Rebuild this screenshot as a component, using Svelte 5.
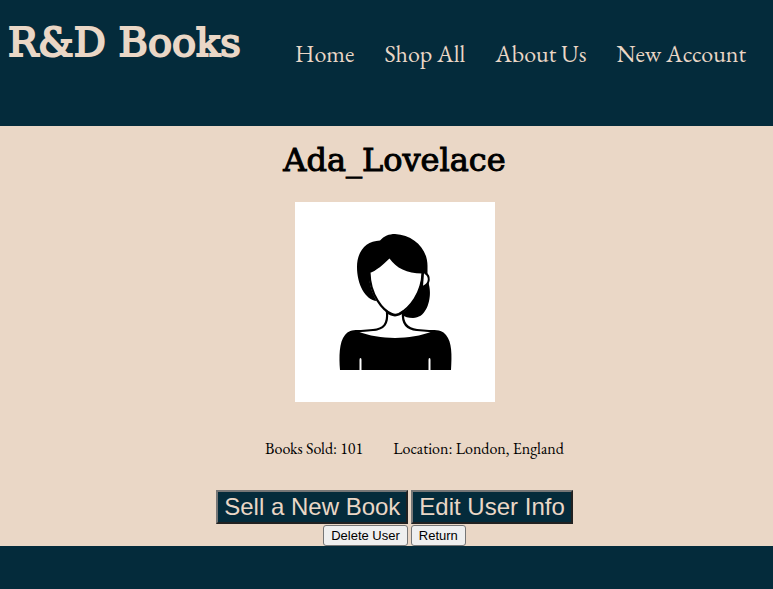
<script>
  const links = ['Home', 'Shop All', 'About Us', 'New Account'];
  const user = { name: 'Ada_Lovelace', sold: 101, location: 'London, England' };
</script>

<header>
  <h1>R&amp;D Books</h1>
  <nav>
    {#each links as link}
      <a href="#top">{link}</a>
    {/each}
  </nav>
</header>

<main>
  <h2>{user.name}</h2>
  <svg class="portrait" viewBox="0 0 200 200" role="img" aria-label="User portrait">
    <rect width="200" height="200" fill="#fff" />
    <path d="M82 99C70 98 62 82 62 65C62 49 71 39 85 38.500C89 34 94 32 100 32C119 33 133 47 132.500 65V72L134 83C137 94 133 116 118 116C113 116 110 115 107 113L100 110Z" />
    <path d="M74 71.500C81 69 89 62 94.500 56.500C101 66 112 71.500 127 71.500C126 92 112 113 100 113C89 113 74 94 74 71.500Z" fill="#fff" />
    <path d="M74.500 71C75 93 88 109 97 112Q100 113.500 104 112C115 106 127 91 127.500 71" fill="none" stroke="#000" stroke-width="2.2" />
    <path d="M129 71.500C135.500 72 134.500 83 128 84Z" fill="#fff" />
    <path d="M130 71C135.500 74 135 82 128.500 84.500" fill="none" stroke="#000" stroke-width="2" />
    <path d="M45 168C44 155 44 140 50 133C53 129 57 128 63 128L137 128C144 128 148 129 151 133C157 140 157 153 156 168H135.500V158Q135.500 156 134.500 156Q133.500 156 133.500 158V168H66.500V158Q66.500 156 65.500 156Q64.500 156 64.500 158V168Z" />
    <path d="M92 111C92 124 89 128 76 129L63 129.500C85 138 115 138 137 129.500L122 128.500C111 127 108 123 108 111Q100 116 92 111Z" fill="#fff" />
    <path d="M92 110C93 122 89 127 78 128L60 129.500M108 110C107 121 112 127 122 128L140 129.500M91 109Q100 117.500 109 109" fill="none" stroke="#000" stroke-width="2.2" />
  </svg>
  <ul>
    <li>Books Sold: {user.sold}</li>
    <li>Location: {user.location}</li>
  </ul>
  <div class="actions">
    <button class="primary">Sell a New Book</button>
    <button class="primary">Edit User Info</button>
  </div>
  <div class="actions last">
    <button>Delete User</button>
    <button>Return</button>
  </div>
</main>

<style>
  :global(body) {
    margin: 0;
    background: #042b3b;
    font-family: "EB Garamond", "Liberation Serif", serif;
  }
  header {
    display: flex;
    justify-content: space-between;
    box-sizing: border-box;
    min-height: 126px;
    padding: 16px 27px 16px 8px;
    color: #ead7c6;
  }
  h1, h2 {
    margin: 0;
    font-family: "Special Elite", "DejaVu Serif", serif;
    font-weight: 400;
    -webkit-text-stroke: 1px currentColor;
  }
  h1 {
    font-size: 40px;
    line-height: 52px;
    -webkit-text-stroke-width: 2px;
  }
  nav {
    display: flex;
    gap: 30px;
    padding-top: 23px;
    font-size: 24px;
    line-height: 30px;
  }
  nav a {
    color: inherit;
    text-decoration: none;
  }
  main {
    display: flex;
    flex-direction: column;
    align-items: center;
    padding: 14px 0 0 16px;
    background: #ead7c6;
    color: #000;
  }
  h2 {
    font-size: 32px;
    line-height: 40px;
  }
  .portrait {
    width: 200px;
    height: 200px;
    margin-top: 22px;
  }
  ul {
    display: flex;
    gap: 30px;
    margin: 36px 0 30px;
    padding: 0 0 0 40px;
    list-style: none;
    font-size: 16px;
    line-height: 22px;
  }
  .actions {
    display: flex;
    gap: 3px;
  }
  .last {
    margin-top: 1px;
  }
  button {
    box-sizing: border-box;
    height: 21px;
    margin: 0;
    padding: 0 7px;
    border: 1px solid #767676;
    border-radius: 3px;
    background: #efefef;
    color: #000;
    font: 13px/19px "Liberation Sans", Arial, sans-serif;
  }
  .primary {
    height: 34px;
    padding: 0 6px;
    border: 2px solid;
    border-color: #767676 #212121 #212121 #767676;
    border-radius: 0;
    background: #042b3b;
    color: #ead7c6;
    font-size: 24px;
    line-height: 30px;
  }
</style>
